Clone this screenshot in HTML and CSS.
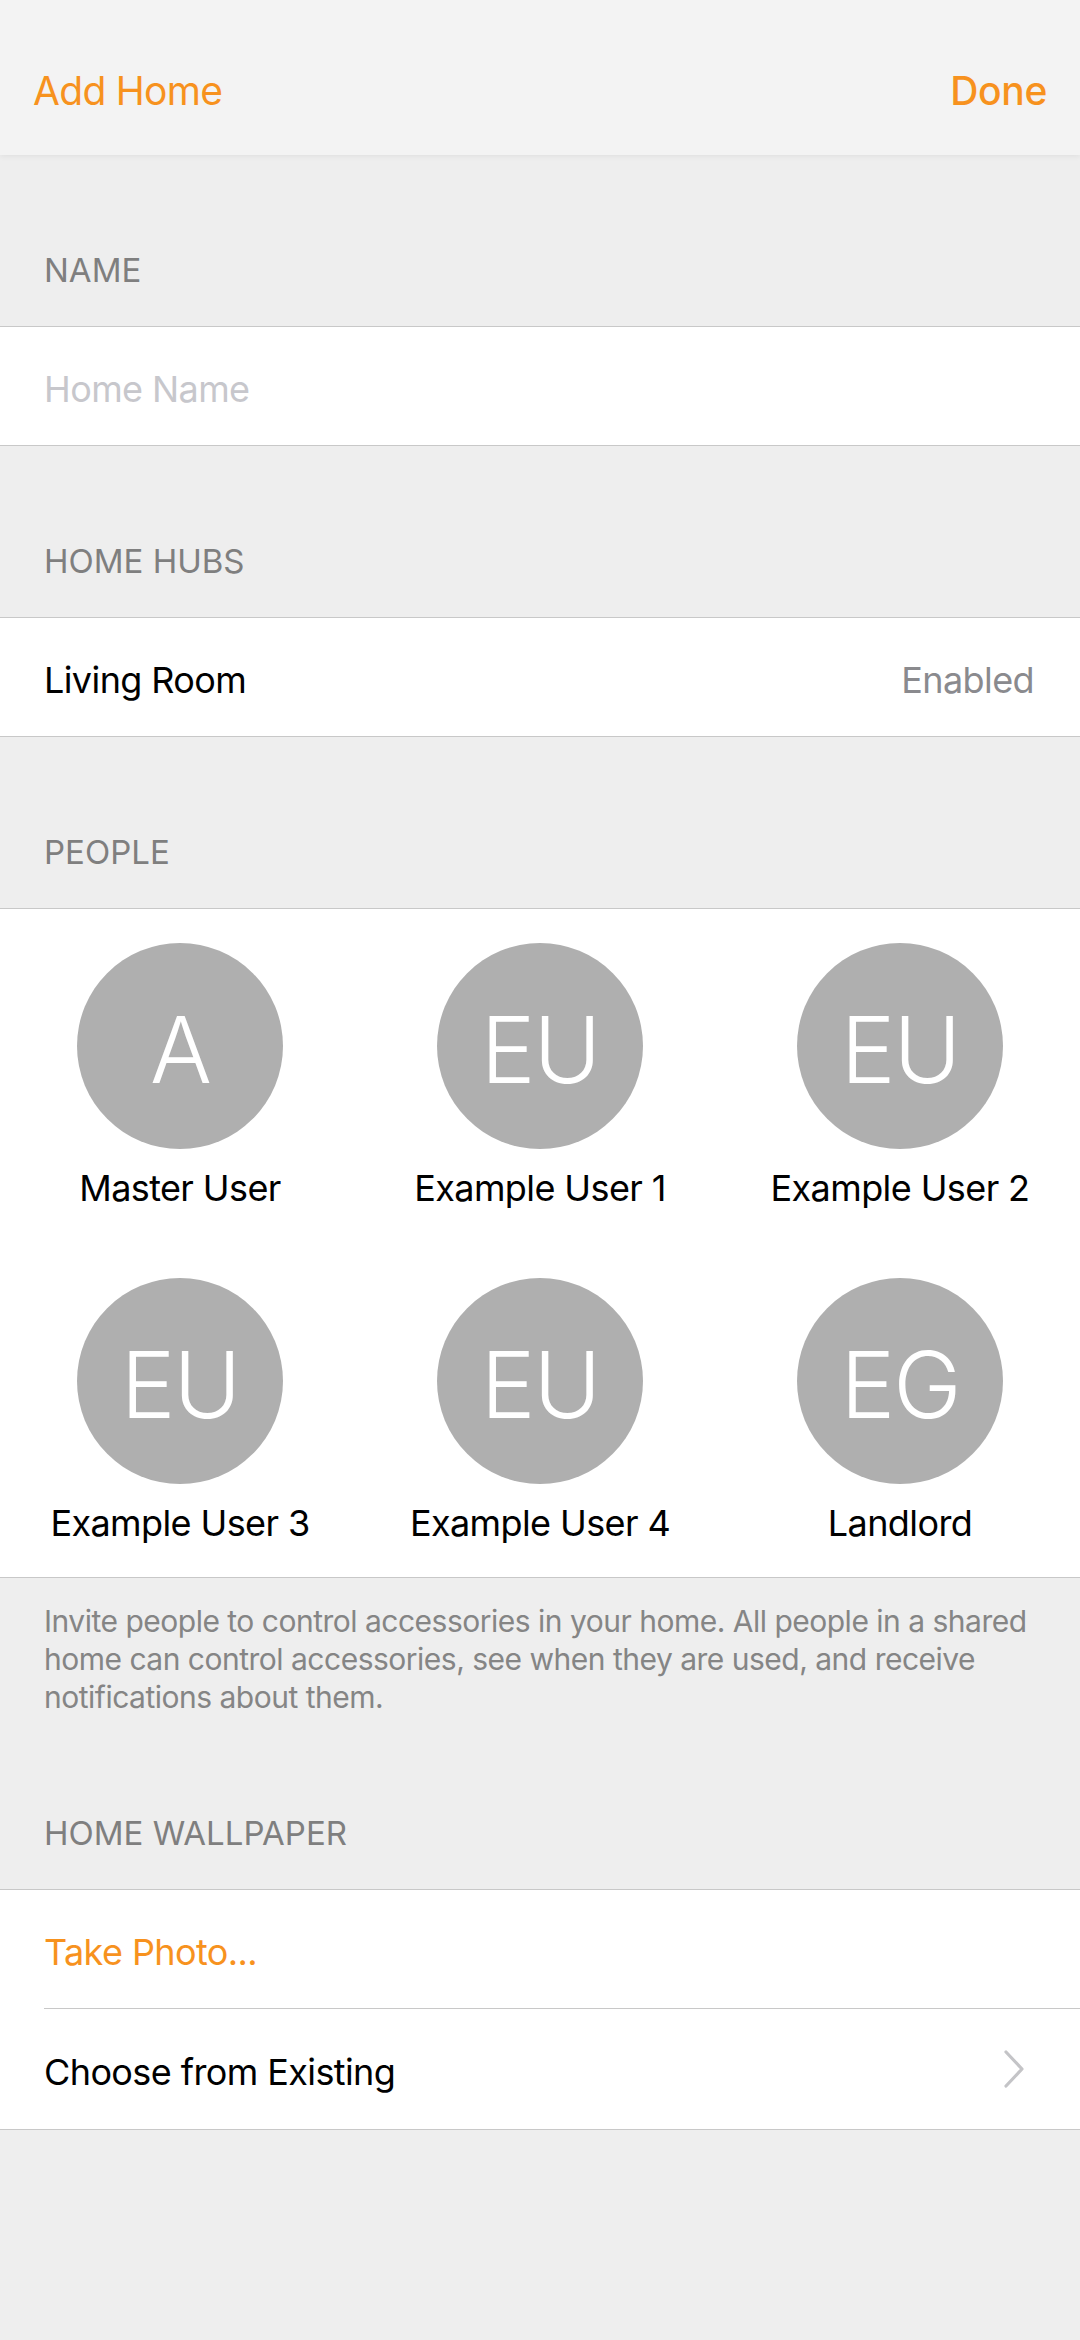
FILE: index.html
```html
<!DOCTYPE html>
<html lang="en">
<head>
<meta charset="utf-8">
<title>Add Home</title>
<link rel="stylesheet" href="styles.css">
</head>
<body>
<header class="nav">
  <a class="nav-btn">Add Home</a>
  <a class="nav-btn nav-done">Done</a>
</header>

<section class="group">
  <div class="group-header">NAME</div>
  <div class="cells">
    <div class="cell"><div class="cell-body"><span class="placeholder">Home Name</span></div></div>
  </div>
</section>

<section class="group">
  <div class="group-header">HOME HUBS</div>
  <div class="cells">
    <div class="cell"><div class="cell-body"><span class="label">Living Room</span><span class="detail">Enabled</span></div></div>
  </div>
</section>

<section class="group">
  <div class="group-header">PEOPLE</div>
  <div class="cells people">
    <div class="person"><div class="avatar">A</div><div class="person-name">Master User</div></div>
    <div class="person"><div class="avatar">EU</div><div class="person-name">Example User 1</div></div>
    <div class="person"><div class="avatar">EU</div><div class="person-name">Example User 2</div></div>
    <div class="person"><div class="avatar">EU</div><div class="person-name">Example User 3</div></div>
    <div class="person"><div class="avatar">EU</div><div class="person-name">Example User 4</div></div>
    <div class="person"><div class="avatar">EG</div><div class="person-name">Landlord</div></div>
  </div>
  <p class="group-footer">Invite people to control accessories in your home. All people in a shared home can control accessories, see when they are used, and receive notifications about them.</p>
</section>

<section class="group">
  <div class="group-header">HOME WALLPAPER</div>
  <div class="cells">
    <div class="cell"><div class="cell-body"><span class="action">Take Photo...</span></div></div>
    <div class="cell tall"><div class="cell-body inset"><span class="label">Choose from Existing</span>
      <svg class="chevron" width="22" height="38" viewBox="0 0 22 38"><path d="M3 2 L19 19 L3 36" fill="none" stroke="#c4c4c7" stroke-width="3.2" stroke-linecap="round" stroke-linejoin="round"/></svg>
    </div></div>
  </div>
</section>
</body>
</html>
```

FILE: styles.css
```css
html, body {
  margin: 0;
  padding: 0;
}
body {
  background: #eeeeee;
  font-family: Inter, "Liberation Sans", sans-serif;
  width: 1080px;
  min-height: 2340px;
  -webkit-font-smoothing: antialiased;
}
.nav {
  height: 155px;
  box-sizing: border-box;
  padding: 67px 33px 0 33px;
  background: #f3f3f3;
  display: flex;
  justify-content: space-between;
  align-items: flex-start;
  box-shadow: 0 1px 6px rgba(0, 0, 0, 0.07);
  position: relative;
  z-index: 1;
}
.nav-btn {
  color: #f7921e;
  font-size: 39px;
  line-height: 48px;
  letter-spacing: -0.7px;
}
.nav-done {
  font-weight: 500;
  letter-spacing: -0.3px;
}
.group-header {
  height: 171px;
  box-sizing: border-box;
  padding: 0 44px 36px;
  display: flex;
  align-items: flex-end;
  font-size: 33px;
  line-height: 40px;
  color: #7f7f7f;
  letter-spacing: 0;
}
.cells {
  background: #ffffff;
  border-top: 1px solid #c8c8c8;
  border-bottom: 1px solid #c8c8c8;
}
.cell {
  height: 118px;
  padding-left: 44px;
  display: flex;
}
.cell.tall {
  height: 121px;
}
.cell-body {
  flex: 1;
  display: flex;
  align-items: center;
  justify-content: space-between;
  padding: 6px 46px 0 0;
  font-size: 36px;
  line-height: 43px;
  letter-spacing: -0.6px;
}
.cell-body.inset {
  border-top: 1px solid #c8c8c8;
  padding-right: 55px;
}
.placeholder {
  color: #c7c7cc;
}
.label {
  color: #000000;
}
.detail {
  color: #8a8a8e;
}
.action {
  color: #f7921e;
}
.people {
  display: grid;
  grid-template-columns: repeat(3, 1fr);
  row-gap: 68px;
  padding: 34px 0 32px;
}
.person {
  display: flex;
  flex-direction: column;
  align-items: center;
}
.avatar {
  width: 206px;
  height: 206px;
  border-radius: 50%;
  background: #afafaf;
  color: #ffffff;
  display: flex;
  align-items: center;
  justify-content: center;
  box-sizing: border-box;
  padding-top: 7px;
  font-size: 92px;
  font-weight: 300;
  letter-spacing: -2px;
}
.person-name {
  margin-top: 18px;
  font-size: 36px;
  line-height: 43px;
  color: #000000;
  letter-spacing: -0.6px;
  white-space: nowrap;
}
.group-footer {
  margin: 0;
  padding: 24px 44px 2px;
  font-size: 30px;
  line-height: 38px;
  color: #858585;
  letter-spacing: -0.5px;
}
.chevron {
  display: block;
  margin-top: -6px;
}
```
